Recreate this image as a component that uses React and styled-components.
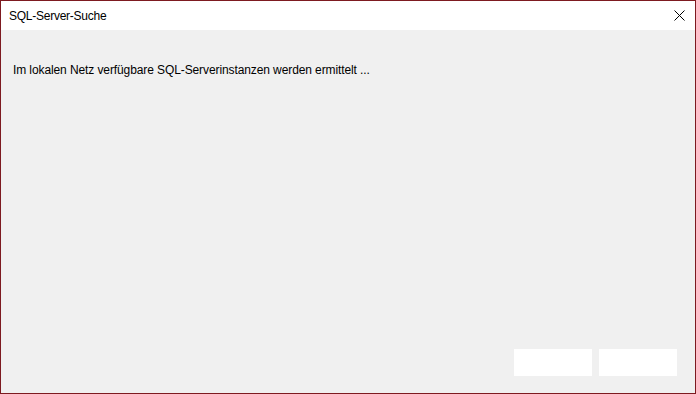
import React from "react";
import styled, { createGlobalStyle } from "styled-components";

const Global = createGlobalStyle`
  html, body { margin: 0; padding: 0; }
  body { width: 696px; height: 394px; overflow: hidden; font-family: "Liberation Sans", Arial, sans-serif; }
`;

const Window = styled.div`
  box-sizing: border-box;
  width: 696px;
  height: 394px;
  border: 1px solid #7d1a20;
  background: #f0f0f0;
  display: flex;
  flex-direction: column;
`;

const TitleBar = styled.div`
  height: 29px;
  background: #ffffff;
  display: flex;
  align-items: center;
  justify-content: space-between;
  padding-left: 8px;
  flex-shrink: 0;
`;

const Title = styled.span`
  font-size: 12px;
  color: #000;
  letter-spacing: -0.25px;
`;

const CloseButton = styled.div`
  width: 46px;
  height: 29px;
  display: flex;
  align-items: center;
  justify-content: center;
  margin-right: -7px;
`;

const Body = styled.div`
  flex: 1;
  display: flex;
  flex-direction: column;
  padding: 32px 18px 17px 12px;
`;

const Message = styled.p`
  margin: 0;
  font-size: 12px;
  color: #000;
  line-height: 16px;
  letter-spacing: -0.1px;
`;

const Spacer = styled.div`
  flex: 1;
`;

const ButtonRow = styled.div`
  display: flex;
  justify-content: flex-end;
  gap: 7px;
`;

const Button = styled.div`
  width: 78px;
  height: 27px;
  background: #ffffff;
`;

export default function App() {
  return (
    <>
      <Global />
      <Window>
        <TitleBar>
          <Title>SQL-Server-Suche</Title>
          <CloseButton>
            <svg width="11" height="11" viewBox="0 0 11 11">
              <path d="M0.5 0.5 L10.5 10.5 M10.5 0.5 L0.5 10.5" stroke="#000" strokeWidth="1" fill="none" />
            </svg>
          </CloseButton>
        </TitleBar>
        <Body>
          <Message>Im lokalen Netz verfügbare SQL-Serverinstanzen werden ermittelt ...</Message>
          <Spacer />
          <ButtonRow>
            <Button />
            <Button />
          </ButtonRow>
        </Body>
      </Window>
    </>
  );
}
